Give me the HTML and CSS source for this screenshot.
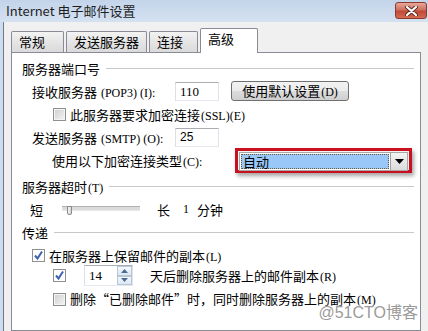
FILE: index.html
```html
<!DOCTYPE html>
<html lang="zh-CN">
<head>
    <meta charset="UTF-8">
    <title>Internet 电子邮件设置</title>
    <link rel="stylesheet" href="styles.css">
</head>
<body>

    <div class="window">
        <div class="titlebar">
            <span class="title">Internet 电子邮件设置</span>
            <span class="close-btn">
                <svg width="13" height="10" viewBox="0 0 13 10">
                    <path d="M2 1 L11 9 M11 1 L2 9" stroke="#5a2a22" stroke-width="4" stroke-linecap="round"/>
                    <path d="M2 1 L11 9 M11 1 L2 9" stroke="#fff" stroke-width="2.2" stroke-linecap="round"/>
                </svg>
            </span>
        </div>

        <div class="frame">
            <div class="tabs">
                <div class="tab tab-general">常规</div>
                <div class="tab tab-outgoing">发送服务器</div>
                <div class="tab tab-connect">连接</div>
                <div class="tab tab-advanced active">高级</div>
            </div>

            <div class="panel">
                <div class="group-title">
                    <span>服务器端口号</span>
                    <i class="rule"></i>
                </div>

                <div class="row indent-label">
                    <span class="port-label">接收服务器 <span class="ak">(POP3) (I):</span></span>
                    <span class="textbox">110</span>
                    <span class="btn">使用默认设置<span class="ak">(D)</span></span>
                </div>

                <div class="row indent-check">
                    <span class="checkbox"></span>
                    <span class="check-text">此服务器要求加密连接<span class="ak">(SSL)(E)</span></span>
                </div>

                <div class="row indent-label">
                    <span class="port-label">发送服务器 <span class="ak">(SMTP) (O):</span></span>
                    <span class="textbox sans">25</span>
                </div>

                <div class="row row-encrypt">
                    <span class="encrypt-label">使用以下加密连接类型<span class="ak">(C):</span></span>
                    <span class="highlight">
                        <span class="select">
                            <span class="select-value"><span class="focus">自动</span></span>
                            <span class="select-arrow">
                                <svg width="9" height="5" viewBox="0 0 9 5"><path d="M0 0 H9 L4.5 5 Z" fill="#000"/></svg>
                            </span>
                        </span>
                    </span>
                </div>

                <div class="group-title">
                    <span>服务器超时<span class="ak">(T)</span></span>
                    <i class="rule"></i>
                </div>

                <div class="row indent-slider">
                    <span>短</span>
                    <span class="slider"><span class="thumb"></span></span>
                    <span class="long">长</span>
                    <span class="num ak">1</span>
                    <span>分钟</span>
                </div>

                <div class="group-title">
                    <span>传递</span>
                    <i class="rule"></i>
                </div>

                <div class="row indent-keep">
                    <span class="checkbox checked"></span>
                    <span class="check-text">在服务器上保留邮件的副本<span class="ak">(L)</span></span>
                </div>

                <div class="row row-days indent-check">
                    <span class="checkbox checked"></span>
                    <span class="spinner">
                        <span class="spin-value">14</span>
                        <span class="spin-btns">
                            <span class="spin-btn"><svg width="7" height="4" viewBox="0 0 7 4"><path d="M0 4 H7 L3.5 0 Z" fill="#4a6c95"/></svg></span>
                            <span class="spin-btn"><svg width="7" height="4" viewBox="0 0 7 4"><path d="M0 0 H7 L3.5 4 Z" fill="#4a6c95"/></svg></span>
                        </span>
                    </span>
                    <span class="days-text">天后删除服务器上的邮件副本<span class="ak">(R)</span></span>
                </div>

                <div class="row indent-check">
                    <span class="checkbox"></span>
                    <span class="check-text last">删除“已删除邮件”时，同时删除服务器上的副本<span class="ak">(M)</span></span>
                </div>
            </div>
        </div>

        <div class="watermark">@51CTO博客</div>
    </div>

</body>
</html>
```

FILE: styles.css
```css
body {
    margin: 0;
    font-family: "Noto Sans CJK SC", "Noto Sans", sans-serif;
    font-size: 13px;
    color: #000;
}

.window {
    position: relative;
    width: 428px;
    height: 331px;
    overflow: hidden;
    background-color: #cddcee;
    display: flex;
    flex-direction: column;
}

.titlebar {
    height: 22px;
    flex-shrink: 0;
    display: flex;
    align-items: center;
    justify-content: space-between;
    padding-left: 6px;
    background: linear-gradient(#c3d4ea, #d4e1f1);
}

.title {
    font-size: 13px;
    line-height: 16px;
    color: #1e1e1e;
}

.close-btn {
    width: 30px;
    height: 15px;
    margin-right: 1px;
    margin-top: -1px;
    border: 1px solid #8a3a2e;
    border-radius: 3px;
    background: linear-gradient(#e7a89a, #d0705e 45%, #c04a36 55%, #d46a52);
    display: flex;
    align-items: center;
    justify-content: center;
}

.frame {
    flex: 1;
    margin-left: 3px;
    border-left: 1px solid #707a86;
    background-color: #f0f0f0;
    padding-top: 6px;
    display: flex;
    flex-direction: column;
}

.tabs {
    height: 24px;
    display: flex;
    align-items: flex-end;
    padding-left: 7px;
}

.tab {
    height: 21px;
    box-sizing: border-box;
    border: 1px solid #898c95;
    border-bottom: none;
    margin-right: 2px;
    padding-left: 7px;
    line-height: 20px;
    background: linear-gradient(#f3f3f3, #e5e5e5 50%, #dadada);
    border-radius: 2px 2px 0 0;
}

.tab-general { width: 53px; }
.tab-outgoing { width: 81px; }
.tab-connect { width: 49px; }

.tab.active {
    width: 58px;
    height: 25px;
    line-height: 19px;
    background: #fff;
    position: relative;
    z-index: 1;
    margin-bottom: -1px;
}

.panel {
    flex: 1;
    margin-left: 7px;
    width: 410px;
    box-sizing: border-box;
    border: 1px solid #898c95;
    background-color: #fff;
    padding: 5px 6px 0 10px;
    display: flex;
    flex-direction: column;
    gap: 3px;
}

.ak {
    font-family: "Liberation Serif", serif;
    font-size: 12px;
    margin-left: 1px;
}

.group-title {
    height: 20px;
    display: flex;
    align-items: center;
}

.rule {
    flex: 1;
    margin-left: 6px;
    border-top: 1px solid #c9c9c9;
}

.row {
    height: 20px;
    display: flex;
    align-items: center;
}

.indent-label { padding-left: 10px; }
.indent-check { padding-left: 31px; }
.indent-slider { padding-left: 8px; }
.indent-keep { padding-left: 10px; }

.port-label {
    width: 143px;
}

.textbox {
    width: 44px;
    height: 19px;
    box-sizing: border-box;
    border: 1px solid #abadb3;
    border-color: #abadb3 #e2e3ea #e3e9ef #dbdfe6;
    padding-left: 4px;
    line-height: 17px;
    font-family: "Liberation Serif", serif;
    font-size: 13px;
}

.textbox.sans {
    font-family: "Liberation Sans", sans-serif;
    font-size: 12px;
}

.btn {
    margin-left: 12px;
    width: 118px;
    height: 20px;
    box-sizing: border-box;
    border: 1px solid #707070;
    border-radius: 3px;
    background: linear-gradient(#f2f2f2, #ebebeb 50%, #dddddd 50%, #cfcfcf);
    text-align: center;
    line-height: 18px;
}

.checkbox {
    width: 13px;
    height: 13px;
    box-sizing: border-box;
    border: 1px solid #8e8f8f;
    background: linear-gradient(135deg, #cfcfcf, #f4f4f4);
    box-shadow: inset 0 0 0 1px #f4f4f4;
    flex-shrink: 0;
}

.checkbox.checked {
    background: #fff url("data:image/svg+xml;utf8,<svg xmlns='http://www.w3.org/2000/svg' width='11' height='11'><path d='M2 5.5 L4.5 8.5 L9 1.5' fill='none' stroke='%234060b0' stroke-width='2'/></svg>") center no-repeat;
    box-shadow: none;
}

.check-text {
    margin-left: 4px;
}

.check-text.last {
    line-height: 14px;
}

.row-encrypt {
    height: 26px;
    margin-top: -3px;
    padding-left: 30px;
}

.encrypt-label {
    width: 183px;
}

.highlight {
    width: 177px;
    height: 25px;
    box-sizing: border-box;
    border: 3px solid #c8101e;
    box-shadow: 2px 3px 4px rgba(0, 0, 0, 0.35);
    padding: 1px;
    background: #f4f4f4;
}

.select {
    display: flex;
    height: 17px;
    border: 1px solid #a7a7a7;
    background: #fff;
}

.select-value {
    flex: 1;
    padding: 1px;
}

.focus {
    display: block;
    height: 13px;
    border: 1px dotted #6a5a3a;
    background-color: #99c8f8;
    line-height: 13px;
    padding-left: 1px;
}

.select-arrow {
    width: 16px;
    border-left: 1px solid #a0a0a0;
    background: linear-gradient(#f2f2f2, #dcdcdc);
    display: flex;
    align-items: center;
    justify-content: center;
}

.slider {
    width: 78px;
    height: 3px;
    margin-left: 19px;
    margin-top: -2px;
    border-top: 1px solid #b0b0b0;
    border-bottom: 1px solid #e8e8e8;
    background: #dcdcdc;
    display: flex;
    align-items: center;
}

.thumb {
    width: 5px;
    height: 9px;
    margin-left: 5px;
    margin-top: 4px;
    box-sizing: border-box;
    border: 1px solid #8a8a8a;
    border-radius: 1px 1px 3px 3px;
    background: linear-gradient(90deg, #f6f6f6, #d6d6d6);
}

.long {
    margin-left: 17px;
}

.num {
    margin-left: 13px;
    margin-right: 8px;
}

.row-days {
    height: 21px;
    margin-top: -3px;
}

.spinner {
    margin-left: 18px;
    width: 49px;
    height: 21px;
    box-sizing: border-box;
    border: 1px solid #abadb3;
    border-color: #abadb3 #e2e3ea #e3e9ef #dbdfe6;
    display: flex;
}

.spin-value {
    flex: 1;
    padding-left: 4px;
    line-height: 19px;
    font-family: "Liberation Serif", serif;
    font-size: 13px;
}

.spin-btns {
    width: 15px;
    display: flex;
    flex-direction: column;
}

.spin-btn {
    flex: 1;
    box-sizing: border-box;
    border: 1px solid #b8c6d6;
    background: linear-gradient(#f4f8fc, #dde8f3);
    display: flex;
    align-items: center;
    justify-content: center;
}

.days-text {
    margin-left: 17px;
}

.watermark {
    position: absolute;
    right: 10px;
    bottom: 11px;
    font-family: "Liberation Sans", "Noto Sans CJK SC", sans-serif;
    font-size: 16px;
    line-height: 14px;
    color: #9a9a9a;
    text-shadow: 0 0 2px #fff, 0 0 2px #fff;
}
```
